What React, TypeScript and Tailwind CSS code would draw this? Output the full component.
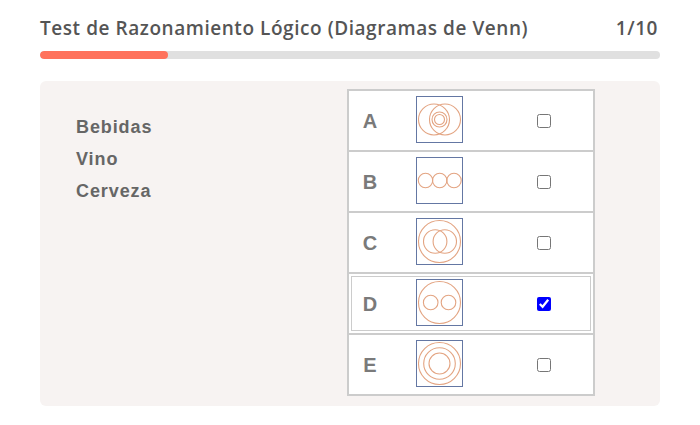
import React from "react";

type Circle = [number, number, number];

const diagrams: Record<string, Circle[]> = {
  A: [
    [18, 23.5, 15.5],
    [29, 23.5, 15.5],
    [23.5, 23.5, 7.5],
    [23.5, 23.5, 5],
  ],
  B: [
    [9.5, 23.5, 7.2],
    [23.7, 23.5, 7.2],
    [38, 23.5, 7.2],
  ],
  C: [
    [23.5, 23.5, 21],
    [19.2, 23.5, 11.7],
    [28.8, 23.5, 11.7],
  ],
  D: [
    [23.5, 23.5, 21],
    [14.7, 23.5, 7.3],
    [32.5, 23.5, 7.3],
  ],
  E: [
    [23.5, 23.5, 21],
    [23.5, 23.5, 15.8],
    [23.5, 23.5, 10.5],
  ],
};

function Venn({ circles }: { circles: Circle[] }) {
  return (
    <svg width="47" height="47" viewBox="0 0 47 47" className="block">
      <rect x="0.5" y="0.5" width="46" height="46" fill="white" stroke="#6477a3" strokeWidth="1" />
      {circles.map(([cx, cy, r], i) => (
        <circle key={i} cx={cx} cy={cy} r={r} fill="none" stroke="#e3a482" strokeWidth="1.1" />
      ))}
    </svg>
  );
}

export default function App() {
  const options = ["A", "B", "C", "D", "E"];
  const selected = "D";
  return (
    <div className="w-[700px] h-[425px] bg-white px-[40px] pt-[16px]">
      <div
        className="flex justify-between items-center h-[24px] text-[19px] leading-[24px] font-semibold text-[#555555] tracking-[0.55px]"
        style={{ fontFamily: "'Open Sans', sans-serif" }}
      >
        <span>Test de Razonamiento Lógico (Diagramas de Venn)</span>
        <span className="pr-[2px]">1/10</span>
      </div>
      <div className="mt-[11px] h-[8px] rounded-full bg-[#e0e0e0] overflow-hidden">
        <div className="h-full w-[128px] rounded-full bg-[#ff725c]" />
      </div>
      <div className="mt-[22px] h-[325px] rounded-[6px] bg-[#f7f3f2] flex">
        <div
          className="w-[307px] pl-[36px] pt-[30px] text-[18px] leading-[32px] font-bold text-[#666666] tracking-[0.9px]"
          style={{ fontFamily: "'Liberation Sans', Arial, sans-serif" }}
        >
          <div>Bebidas</div>
          <div>Vino</div>
          <div>Cerveza</div>
        </div>
        <div className="mt-[8px] w-[248px] h-[307px] bg-[#cccccc] p-[2px] flex flex-col gap-[2px]">
          {options.map((o) => (
            <div key={o} className="h-[59px] bg-white p-[2px]">
              <div
                className={
                  "h-full flex items-center border " +
                  (o === selected ? "border-[#cccccc]" : "border-transparent")
                }
              >
                <div
                  className="w-[36px] text-center text-[20px] font-bold text-[#7a7a7a]"
                  style={{ fontFamily: "'Liberation Sans', Arial, sans-serif" }}
                >
                  {o}
                </div>
                <div className="ml-[28px] -mt-[2px]">
                  <Venn circles={diagrams[o]} />
                </div>
                <input
                  type="checkbox"
                  defaultChecked={o === selected}
                  className="ml-[74px] m-0 w-[14px] h-[14px] accent-[#0000ff]"
                />
              </div>
            </div>
          ))}
        </div>
      </div>
    </div>
  );
}
